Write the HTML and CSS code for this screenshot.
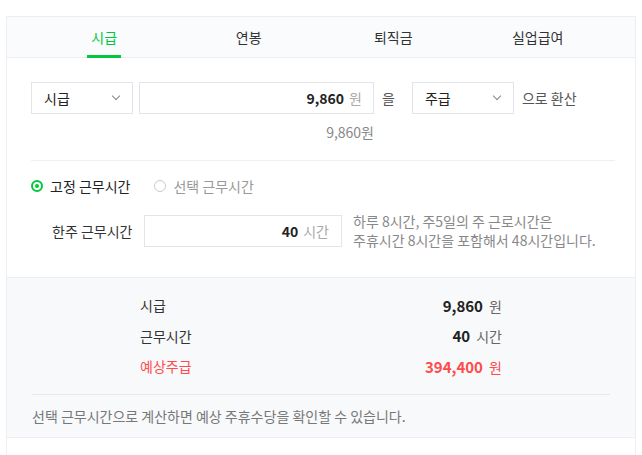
FILE: index.html
```html
<!DOCTYPE html>
<html>
	<head>
		<meta charset="utf-8">
		<title>시급 계산기</title>
		<link rel="stylesheet" href="styles.css">
	</head>
	<body>
		<div class="calc">
			<ul class="tabs">
				<li class="tab on"><span>시급</span></li>
				<li class="tab"><span>연봉</span></li>
				<li class="tab"><span>퇴직금</span></li>
				<li class="tab"><span>실업급여</span></li>
			</ul>
			<div class="form">
				<div class="row">
					<div class="select"><span>시급</span><i class="arrow"></i></div>
					<div class="input wide"><b>9,860</b><em>원</em></div>
					<span class="word">을</span>
					<div class="select"><span>주급</span><i class="arrow"></i></div>
					<span class="word">으로 환산</span>
				</div>
				<p class="converted">9,860원</p>
				<div class="line"></div>
				<div class="radios">
					<label class="radio checked"><i></i>고정 근무시간</label>
					<label class="radio"><i></i>선택 근무시간</label>
				</div>
				<div class="row hours">
					<span class="label">한주 근무시간</span>
					<div class="input short"><b>40</b><em>시간</em></div>
					<p class="help">하루 8시간, 주5일의 주 근로시간은<br>주휴시간 8시간을 포함해서 48시간입니다.</p>
				</div>
			</div>
			<div class="result">
				<dl class="rows">
					<div class="item"><dt>시급</dt><dd><b>9,860</b> 원</dd></div>
					<div class="item"><dt>근무시간</dt><dd><b>40</b> 시간</dd></div>
					<div class="item red"><dt>예상주급</dt><dd><b>394,400</b> 원</dd></div>
				</dl>
				<p class="note">선택 근무시간으로 계산하면 예상 주휴수당을 확인할 수 있습니다.</p>
			</div>
		</div>
	</body>
</html>
```

FILE: styles.css
```css
*{margin: 0; padding: 0; box-sizing: border-box;}
body{font-family: "Noto Sans CJK KR", "Noto Sans", sans-serif; font-size: 14px; color: #222; background: #fff;}
ul{list-style: none;}
em, i{font-style: normal;}

.calc{margin: 16px 6px 0 6px; border: 1px solid #eceef1; border-bottom: none; height: 439px;}

.tabs{display: flex; height: 41px; padding: 0 25px; background: #fafbfd; border-bottom: 1px solid #eceef1;}
.tab{flex: 1; display: flex; justify-content: center;}
.tab span{display: flex; align-items: center; height: 41px; padding: 2px 4px 0; border-bottom: 3px solid transparent; color: #333;}
.tab.on span{color: #00c73c; border-bottom-color: #00c73c;}

.form{padding: 24px 20px 27px 24px;}
.row{display: flex; align-items: center;}
.select{display: flex; align-items: center; justify-content: space-between; width: 102px; height: 32px; padding: 0 13px 0 12px; border: 1px solid #e1e4ea; color: #222;}
.arrow{width: 6px; height: 6px; border-right: 1px solid #888; border-bottom: 1px solid #888; transform: rotate(45deg); margin-top: -4px;}
.input{display: flex; align-items: center; justify-content: flex-end; height: 32px; border: 1px solid #e1e4ea; padding-right: 11px;}
.input b{font-weight: bold; color: #222;}
.input em{color: #aaa; margin-left: 5px;}
.input.wide{width: 235px; margin-left: 6px;}
.word{color: #555; margin-left: 8px;}
.row .word:nth-child(3){margin-right: 17px;}

.converted{width: 343px; height: 20px; text-align: right; color: #888; line-height: 20px; margin-top: 8px;}
.line{height: 1px; background: #eef0f3; margin-top: 18px;}

.radios{display: flex; height: 20px; margin-top: 15px; line-height: 20px;}
.radio{display: flex; align-items: center; height: 20px; color: #999; margin-right: 24px;}
.radio i{width: 12px; height: 12px; border: 1px solid #ccc; border-radius: 50%; margin-right: 7px; position: relative;}
.radio.checked{color: #222;}
.radio.checked i{border: 2px solid #00c73c;}
.radio.checked i:after{content: ""; position: absolute; left: 2px; top: 2px; width: 4px; height: 4px; border-radius: 50%; background: #00c73c;}

.hours{height: 38px; margin-top: 16px;}
.label{padding-left: 21px; width: 113px; color: #333;}
.input.short{width: 198px; padding-right: 12px;}
.help{margin-left: 11px; color: #888; font-size: 14px; line-height: 19px; height: 38px;}

.result{background: #f8f9fb; border-top: 1px solid #eceef1; border-bottom: 1px solid #eceef1; padding: 12px 25px 11px;}
.rows{width: 362px; margin-left: 108px; padding-bottom: 12px;}
.item{display: flex; justify-content: space-between; align-items: center; height: 30.5px;}
.item dt{color: #333;}
.item dd{color: #666;}
.item dd b{color: #222; font-size: 15px; margin-right: 3px;}
.item.red dt, .item.red dd, .item.red dd b{color: #ff4b4b;}
.note{border-top: 1px solid #e6e8ec; padding-top: 11px; height: 32px; line-height: 20px; color: #777; font-size: 14px; margin: 0;}
```
